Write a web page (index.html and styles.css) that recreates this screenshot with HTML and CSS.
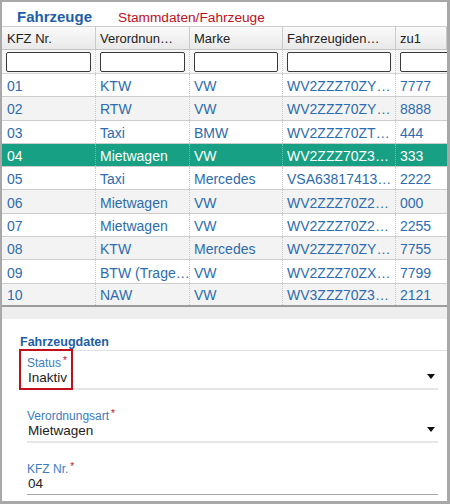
FILE: index.html
```html
<!DOCTYPE html>
<html lang="de">
<head>
  <meta charset="UTF-8" />
  <meta name="viewport" content="width=device-width, initial-scale=1.0" />
  <title>Fahrzeuge</title>
  <link rel="stylesheet" href="styles.css">
</head>
<body>
  <div class="window">
    <div class="titlebar">
      <span class="title">Fahrzeuge</span>
      <span class="crumb">Stammdaten/Fahrzeuge</span>
    </div>

    <div class="grid">
      <div class="row head">
        <div class="cell">KFZ Nr.</div>
        <div class="cell">Verordnun…</div>
        <div class="cell">Marke</div>
        <div class="cell">Fahrzeugiden…</div>
        <div class="cell">zu1</div>
      </div>
      <div class="row filter">
        <div class="cell"><input type="text"></div>
        <div class="cell"><input type="text"></div>
        <div class="cell"><input type="text"></div>
        <div class="cell"><input type="text"></div>
        <div class="cell"><input type="text"></div>
      </div>

      <div class="row"><div class="cell">01</div><div class="cell">KTW</div><div class="cell">VW</div><div class="cell">WV2ZZZ70ZY…</div><div class="cell">7777</div></div>
      <div class="row alt"><div class="cell">02</div><div class="cell">RTW</div><div class="cell">VW</div><div class="cell">WV2ZZZ70ZY…</div><div class="cell">8888</div></div>
      <div class="row"><div class="cell">03</div><div class="cell">Taxi</div><div class="cell">BMW</div><div class="cell">WV2ZZZ70ZT…</div><div class="cell">444</div></div>
      <div class="row selected"><div class="cell">04</div><div class="cell">Mietwagen</div><div class="cell">VW</div><div class="cell">WV2ZZZ70Z3…</div><div class="cell">333</div></div>
      <div class="row"><div class="cell">05</div><div class="cell">Taxi</div><div class="cell">Mercedes</div><div class="cell">VSA63817413…</div><div class="cell">2222</div></div>
      <div class="row alt"><div class="cell">06</div><div class="cell">Mietwagen</div><div class="cell">VW</div><div class="cell">WV2ZZZ70Z2…</div><div class="cell">000</div></div>
      <div class="row"><div class="cell">07</div><div class="cell">Mietwagen</div><div class="cell">VW</div><div class="cell">WV2ZZZ70Z2…</div><div class="cell">2255</div></div>
      <div class="row alt"><div class="cell">08</div><div class="cell">KTW</div><div class="cell">Mercedes</div><div class="cell">WV2ZZZ70ZY…</div><div class="cell">7755</div></div>
      <div class="row"><div class="cell">09</div><div class="cell">BTW (Trage…</div><div class="cell">VW</div><div class="cell">WV2ZZZ70ZX…</div><div class="cell">7799</div></div>
      <div class="row alt last"><div class="cell">10</div><div class="cell">NAW</div><div class="cell">VW</div><div class="cell">WV3ZZZ70Z3…</div><div class="cell">2121</div></div>
    </div>

    <div class="splitter"></div>

    <div class="details">
      <h3 class="section-title">Fahrzeugdaten</h3>

      <div class="field">
        <div class="mark"></div>
        <label>Status<span class="req">*</span></label>
        <div class="value">Inaktiv<span class="caret"></span></div>
      </div>

      <div class="field">
        <label>Verordnungsart<span class="req">*</span></label>
        <div class="value">Mietwagen<span class="caret"></span></div>
      </div>

      <div class="field text">
        <label>KFZ Nr.<span class="req">*</span></label>
        <div class="value">04</div>
      </div>
    </div>
  </div>
</body>
</html>
```

FILE: styles.css
```css
:root {
  --frame: #a8a8a8;
  --title-blue: #1d5ea6;
  --link-blue: #2d6cae;
  --label-blue: #3d7cc0;
  --red: #c0101c;
  --selected: #17a083;
}

body {
  margin: 0;
  padding: 0;
  background: #fff;
  font-family: "Liberation Sans", Arial, sans-serif;
}

.window {
  width: 450px;
  height: 504px;
  box-sizing: border-box;
  border: solid var(--frame);
  border-width: 2px 3px 3px 2px;
  background: #fff;
  overflow: hidden;
}

.titlebar {
  height: 24px;
  box-sizing: border-box;
  display: flex;
  align-items: baseline;
  padding: 6px 0 0 15px;
}

.title {
  width: 101px;
  font-size: 15px;
  line-height: 17px;
  font-weight: bold;
  color: var(--title-blue);
}

.crumb {
  font-size: 13.7px;
  line-height: 17px;
  color: var(--red);
}

/* grid */
.row {
  display: grid;
  grid-template-columns: 94px 94px 93px 113px 1fr;
  height: 23.3px;
  box-sizing: border-box;
  border-bottom: 1.5px solid #cdcdcd;
  font-size: 14px;
  color: var(--link-blue);
}

.cell {
  display: flex;
  align-items: center;
  padding: 2px 4px 0 4px;
  white-space: nowrap;
  overflow: hidden;
  border-right: 1px dotted #c8c8c8;
}

.cell:first-child {
  padding-left: 5px;
}

.cell:last-child {
  border-right: none;
}

.row.head {
  height: 24px;
  border-top: 1px solid #cfcfcf;
  border-bottom: 1px solid #c4c4c4;
  background: linear-gradient(#fafafa, #e9e9e9);
  color: #222;
  font-size: 13px;
}

.row.head .cell {
  padding-top: 1px;
  border-right: 1px solid #cacaca;
}

.row.filter {
  height: 24px;
  border-bottom: 1px solid #d4d4d4;
  background: #f7f7f7;
}

.row.filter .cell {
  padding: 0 4px;
}

.row.filter input {
  width: 100%;
  height: 20px;
  box-sizing: border-box;
  margin: 0;
  border: 1.5px solid #3a3a3a;
  border-radius: 2px;
  background: #fff;
  outline: none;
}

.row.filter .cell:last-child input {
  width: 70px;
  flex-shrink: 0;
}

.row.alt {
  background: #f3f3f3;
}

.row.selected {
  background: var(--selected);
  color: #fff;
}

.row.selected .cell {
  border-right-color: rgba(255, 255, 255, 0.35);
}

.row.last {
  border-bottom: 2px solid #9c9c9c;
}

.splitter {
  height: 12px;
  background: #eeeeee;
}

/* detail form */
.details {
  padding: 15px 0 0 0;
}

.section-title {
  margin: 0 0 1px 18px;
  font-size: 12.5px;
  line-height: 16px;
  font-weight: bold;
  color: var(--title-blue);
  border-bottom: 1px solid #e2e2e2;
}

.field {
  position: relative;
  margin: 0 9px 15px 25px;
}

.field label {
  display: block;
  padding-top: 2px;
  font-size: 12px;
  line-height: 14px;
  color: var(--label-blue);
}

.req {
  color: var(--red);
  font-size: 10px;
  vertical-align: 3px;
  margin-left: 2px;
}

.value {
  display: flex;
  align-items: center;
  justify-content: space-between;
  height: 16px;
  padding: 0 3px 2px 1px;
  font-size: 13.5px;
  color: #222;
  border-bottom: 2px solid #e6e6e6;
}

.field.text .value {
  height: 15px;
  border-bottom: 1px solid #a6a6a6;
  padding-bottom: 3px;
}

.caret {
  width: 0;
  height: 0;
  margin-top: -2px;
  border-left: 4.5px solid transparent;
  border-right: 4.5px solid transparent;
  border-top: 5px solid #111;
}

/* red highlight around the status field */
.mark {
  position: absolute;
  left: -8px;
  top: -3px;
  width: 54px;
  height: 41px;
  box-sizing: border-box;
  border: 2px solid var(--red);
}
```
